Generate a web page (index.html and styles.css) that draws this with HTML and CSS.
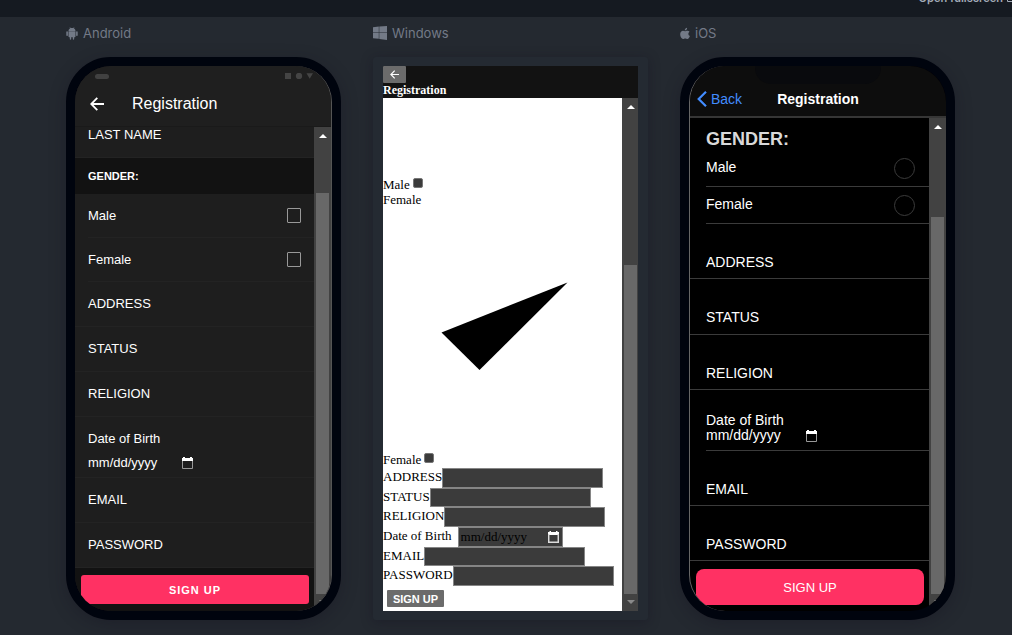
FILE: index.html
```html
<!DOCTYPE html>
<html lang="en">
<head>
<meta charset="utf-8">
<title>Registration preview</title>
<link rel="stylesheet" href="styles.css">
</head>
<body>
<header class="topbar">
  <a class="fullscreen" href="#">Open fullscreen <svg width="9" height="9" viewBox="0 0 9 9" fill="none" stroke="currentColor"><path d="M4 1.500H1.500V7.500H7.500V5M5 .5h3.500V4M8.500.5L4 5"/></svg></a>
</header>
<main class="stage">

  <section class="preview">
    <h2 class="platform"><svg width="12" height="13" viewBox="0 0 12 13" fill="currentColor"><path d="M2.500 4C2.600 2.700 3.300 1.800 4.200 1.300L3.600.3 3.900.1 4.600 1.100Q6 .7 7.400 1.100L8.100.1 8.400.3 7.800 1.300C8.700 1.800 9.400 2.700 9.500 4zM2.500 4.200h7v5.200q0 .8-.8.800H8.200v1.700q0 .8-.7.800t-.7-.8v-1.700H5.200v1.700q0 .8-.7.800t-.7-.8v-1.700H3.300q-.8 0-.8-.8zM.3 5.100q0-.8.800-.8t.8.800v3.200q0 .8-.8.800t-.8-.8zM10.100 5.100q0-.8.800-.8t.8.800v3.200q0 .8-.8.800t-.8-.8z"/></svg>Android</h2>
    <div class="phone">
      <div class="screen android">
        <div class="a-status"><span class="a-pill"></span><svg width="28" height="6" viewBox="0 0 28 6" fill="#444"><path d="M0 0h6v6H0zM21.500.3h6.500L24.700 5.700z"/><circle cx="14" cy="3" r="3.200"/></svg></div>
        <div class="a-bar">
          <button class="plain" aria-label="Back"><svg width="14" height="14" viewBox="0 0 14 14" fill="none" stroke="#fff" stroke-width="1.800"><path d="M14 7H1.500M7.300.9L1.200 7l6.100 6.100"/></svg></button>
          <h1 class="a-title">Registration</h1>
        </div>
        <div class="pane">
          <form class="a-form">
            <div class="a-row a-first"><label for="a-last">LAST NAME</label><input class="ghost" id="a-last"></div>
            <h3 class="a-head">GENDER:</h3>
            <div class="a-row a-check"><label for="a-male">Male</label><input type="checkbox" class="a-box" id="a-male"></div>
            <div class="a-row a-check"><label for="a-female">Female</label><input type="checkbox" class="a-box" id="a-female"></div>
            <div class="a-row"><label for="a-address">ADDRESS</label><input class="ghost" id="a-address"></div>
            <div class="a-row"><label for="a-status">STATUS</label><input class="ghost" id="a-status"></div>
            <div class="a-row"><label for="a-religion">RELIGION</label><input class="ghost" id="a-religion"></div>
            <div class="a-row a-date"><label for="a-dob">Date of Birth</label><span class="date"><input class="date-text" id="a-dob" value="mm/dd/yyyy"><svg width="11" height="12" viewBox="0 0 11 12"><path fill="#fff" d="M0 1h1V0h2v1h5V0h2v1h1v3H0z"/><path fill="none" stroke="#999" d="M.5 4v7.500h10V4"/></svg></span></div>
            <div class="a-row"><label for="a-email">EMAIL</label><input class="ghost" id="a-email"></div>
            <div class="a-row"><label for="a-pass">PASSWORD</label><input type="password" class="ghost" id="a-pass"></div>
            <div class="a-foot"><button type="button" class="a-submit">SIGN UP</button></div>
          </form>
          <div class="scroll a-scroll"><i class="up"></i><i class="thumb"></i><i class="down"></i></div>
        </div>
      </div>
    </div>
  </section>

  <section class="preview">
    <h2 class="platform"><svg width="14" height="14" viewBox="0 0 14 14" fill="currentColor"><path d="M0 1.200l5.800-.7v6H0zM6.300.4L14 0v6.500H6.300zM0 7h5.800v5.800L0 12.200zM6.300 7H14v7l-7.700-1.100z"/></svg>Windows</h2>
    <div class="card">
      <div class="screen windows">
        <div class="w-bar">
          <button class="w-back" aria-label="Back"><svg width="9" height="9" viewBox="0 0 9 9" fill="none" stroke="#fff" stroke-width="1.200"><path d="M9 4.500H1M4.700.7L.9 4.500l3.800 3.800"/></svg></button>
          <h1 class="w-title">Registration</h1>
        </div>
        <div class="pane">
          <form class="w-form">
            <div class="w-check"><label for="w-male">Male</label><input type="checkbox" class="w-box" id="w-male"></div>
            <div class="w-check">Female</div>
            <svg class="w-art" width="239" height="245" viewBox="0 0 239 245"><path d="M58.500 125.500L184.500 75.500 96.500 163z"/></svg>
            <div class="w-check"><label for="w-female">Female</label><input type="checkbox" class="w-box" id="w-female"></div>
            <div class="w-fields">
              <div class="w-row"><label for="w-address">ADDRESS</label><input class="w-input" id="w-address"></div>
              <div class="w-row"><label for="w-status">STATUS</label><input class="w-input" id="w-status"></div>
              <div class="w-row"><label for="w-religion">RELIGION</label><input class="w-input" id="w-religion"></div>
              <div class="w-row w-gap"><label for="w-dob">Date of Birth</label><span class="w-date"><input class="date-text" id="w-dob" value="mm/dd/yyyy"><svg width="11" height="12" viewBox="0 0 11 12"><path fill="#fff" d="M0 1h1.500V0H3v1h5V0h1.500v1H11v3H0z"/><path fill="none" stroke="#ddd" stroke-width="1.500" d="M.7 3v8.200h9.600V3"/></svg></span></div>
              <div class="w-row"><label for="w-email">EMAIL</label><input class="w-input" id="w-email"></div>
              <div class="w-row"><label for="w-pass">PASSWORD</label><input type="password" class="w-input" id="w-pass"></div>
            </div>
            <button type="button" class="w-submit">SIGN UP</button>
          </form>
          <div class="scroll w-scroll"><i class="up"></i><i class="thumb"></i><i class="down"></i></div>
        </div>
      </div>
    </div>
  </section>

  <section class="preview">
    <h2 class="platform"><svg width="10" height="13" viewBox="0 0 11 13" fill="currentColor"><path d="M7.800.2C8 1.900 6.700 3.300 5.200 3.300 5 1.700 6.400.3 7.800.2zM5.500 4C6.200 4 7 3.300 8.200 3.400c1 .1 1.800.5 2.300 1.200-2 1.300-1.700 3.900.4 4.700-.5 1.500-1.600 3.300-2.700 3.300-.9 0-1.300-.6-2.400-.6s-1.500.6-2.400.6C1.800 12.600.2 9.800.2 7.400c0-2.600 1.600-3.900 3.100-3.900.9 0 1.600.5 2.200.5z"/></svg>iOS</h2>
    <div class="phone">
      <div class="screen ios">
        <div class="i-top">
          <div class="i-notch"></div>
          <div class="i-bar">
            <button class="plain i-back"><svg width="10" height="16" viewBox="0 0 10 16" fill="none" stroke="currentColor" stroke-width="2.200"><path d="M9 .8L1.700 8 9 15.200"/></svg>Back</button>
            <h1 class="i-title">Registration</h1>
          </div>
        </div>
        <div class="pane">
          <form class="i-form">
            <h3 class="i-head">GENDER:</h3>
            <div class="i-check"><label for="i-male">Male</label><input type="checkbox" class="i-box" id="i-male"></div>
            <div class="i-check"><label for="i-female">Female</label><input type="checkbox" class="i-box" id="i-female"></div>
            <div class="i-row"><label for="i-address">ADDRESS</label><input class="ghost" id="i-address"></div>
            <div class="i-row i-tall"><label for="i-status">STATUS</label><input class="ghost" id="i-status"></div>
            <div class="i-row"><label for="i-religion">RELIGION</label><input class="ghost" id="i-religion"></div>
            <div class="i-date"><label for="i-dob">Date of Birth</label><span class="date"><input class="date-text" id="i-dob" value="mm/dd/yyyy"><svg width="11" height="12" viewBox="0 0 11 12"><path fill="#fff" d="M0 1h1V0h2v1h5V0h2v1h1v3H0z"/><path fill="none" stroke="#999" d="M.5 4v7.500h10V4"/></svg></span></div>
            <div class="i-row"><label for="i-email">EMAIL</label><input class="ghost" id="i-email"></div>
            <div class="i-row"><label for="i-pass">PASSWORD</label><input type="password" class="ghost" id="i-pass"></div>
            <div class="i-foot"><button type="button" class="i-submit">SIGN UP</button></div>
          </form>
          <div class="scroll i-scroll"><i class="up"></i><i class="thumb"></i><i class="down"></i></div>
        </div>
      </div>
    </div>
  </section>
</main>
</body>
</html>
```
FILE: styles.css
```css
* { box-sizing: border-box; }
body { margin: 0; min-height: 100vh; background: #242930; font-family: "Liberation Sans", Arial, sans-serif; }
h1, h2, h3 { margin: 0; }
svg { flex: none; display: block; }
button { font-family: inherit; cursor: pointer; }
input { border-radius: 0; }

.topbar { height: 17px; background: #151a21; display: flex; justify-content: flex-end; align-items: flex-end; padding-bottom: 11px; overflow: hidden; }
.fullscreen { display: flex; align-items: center; gap: 3px; margin-right: -3px; color: #a3abb8; font: 600 11px/16px Inter, sans-serif; text-decoration: none; white-space: nowrap; }

.stage { display: grid; grid-template-columns: repeat(3, minmax(0, 1fr)); gap: 32px; padding: 8px 57px 15px 66px; }
.platform { display: flex; align-items: center; gap: 5px; height: 16px; margin-bottom: 16px; color: #737a87; font: 400 13px/16px Inter, sans-serif; }
.phone { border: 9px solid #00040e; border-radius: 45px; background: #00040e; box-shadow: 0 4px 16px rgba(20, 18, 32, .35); }
.card { padding: 9px 10px; border-radius: 3px; background: #242a32; box-shadow: 0 2px 12px rgba(20, 18, 32, .4); }
.phone .screen { border-radius: 36px; overflow: hidden; }
.pane { display: flex; }
.pane form { flex: 1; min-width: 0; }
.plain { display: flex; align-items: center; padding: 0; border: 0; background: none; }
.ghost { flex: 1; min-width: 0; height: 16px; padding: 0; border: 0; background: transparent; color: #fff; }

.scroll { width: 17px; background: #424242; display: flex; flex-direction: column; align-items: center; padding: 0 2px; }
.scroll .up { width: 0; border: 4px solid transparent; border-top: 0; border-bottom-color: #fff; margin-top: 7px; }
.scroll .down { width: 0; border: 4px solid transparent; border-bottom: 0; border-top-color: #8a8a8a; margin: 6px 0 7px; }
.scroll .thumb { flex: 1; width: 100%; background: #686868; }
.a-scroll .thumb { margin-top: 55px; }
.w-scroll .thumb { margin-top: 156px; }
.i-scroll .thumb { margin-top: 88px; }
.w-scroll { width: 16px; padding-right: 1px; }

.date { display: flex; align-items: center; }
.date-text { padding: 0; border: 0; background: transparent; color: inherit; font: inherit; }

.android { background: #1e1e1e; color: #fff; border-right: 1px solid #555; font-size: 13px; }
.a-status { height: 20px; display: flex; justify-content: space-between; align-items: center; padding: 0 18px 0 20px; background: #1f1f1f; }
.a-pill { width: 14px; height: 5px; border-radius: 3px; background: #414141; }
.a-bar { height: 41px; display: flex; align-items: center; gap: 28px; padding: 0 15px 4px; background: #1f1f1f; border-bottom: 1px solid #1a1a1a; }
.a-title { font-size: 16px; line-height: 20px; font-weight: 400; }
.a-row { display: flex; align-items: center; height: 45px; padding: 0 13px 1px; border-bottom: 1px solid #232323; }
.a-row.a-first { height: 31px; padding-bottom: 16px; }
.a-head { height: 36px; padding-left: 13px; background: #121212; font-size: 11px; line-height: 36px; }
.a-row.a-check { height: 44px; justify-content: space-between; padding: 0 13px 0 0; margin-left: 13px; }
.a-box { appearance: none; width: 14px; height: 15px; margin: 0; border: 1px solid #999; border-radius: 1px; }
.a-row.a-date { height: 61px; flex-direction: column; align-items: flex-start; justify-content: flex-end; gap: 9px; padding-bottom: 7px; }
.a-date .date-text { width: 94px; }
.a-foot { height: 43px; padding: 7px 5px 7px 6px; background: #121212; }
.a-submit { width: 100%; height: 29px; border: 0; border-radius: 3px; background: #ff3163; color: #fff; font-size: 11px; font-weight: 700; letter-spacing: 1px; }

.windows { background: #fff; color: #000; font: 13px/15px "Liberation Serif", "Times New Roman", serif; }
.w-bar { height: 32px; background: #121212; }
.w-back { display: flex; justify-content: center; align-items: center; width: 23px; height: 17px; padding: 0; border: 0; border-radius: 1px; background: #6b6b6b; }
.w-title { color: #fff; font-size: 12px; line-height: 14px; font-weight: 700; }
.pane .w-form { padding-top: 79px; }
.w-check { display: flex; gap: 3px; height: 15px; }
.w-box { appearance: none; width: 10px; height: 10px; margin: 1px 0 0; border: 1px solid #767676; border-radius: 2px; background: #3b3b3b; }
.w-art { max-width: 100%; }
.w-fields { display: grid; grid-auto-rows: minmax(0, 1fr); height: 118px; margin-top: 1px; }
.w-row { display: flex; line-height: 18px; }
.w-input { width: 161px; min-width: 0; padding: 0; border: 1px solid #858585; background: #3b3b3b; }
.w-gap { gap: 6px; }
.w-date { display: flex; align-items: center; justify-content: space-between; width: 105px; padding: 0 3px 0 2px; border: 1px solid #858585; background: #3b3b3b; }
.w-date .date-text { flex: 1; min-width: 0; }
.w-submit { display: block; width: 57px; height: 17px; margin: 4px; padding: 0; border: 0; border-radius: 1px; background: #6b6b6b; color: #fff; font: 700 11px/18px "Liberation Sans", Arial, sans-serif; }

.ios { background: #000; color: #fff; border-left: 1px solid #666; font-size: 14px; }
.i-top { height: 52px; background: #0d0d0d; border-bottom: 2px solid #363636; }
.i-notch { width: 126px; height: 18px; margin: 0 auto; border-radius: 0 0 16px 16px; background: #090a0d; }
.i-bar { display: grid; grid-template-columns: 1fr auto 1fr; align-items: center; height: 30px; padding: 0 7px; }
.i-back { gap: 4px; color: #428cff; font-size: 14px; }
.i-title { font-size: 14px; line-height: 16px; }
.i-head { padding: 11px 16px 0; color: #d9d9d9; font-size: 18px; line-height: 21px; }
.i-check { display: flex; align-items: center; justify-content: space-between; height: 37px; margin-left: 16px; padding-right: 14px; border-bottom: 1px solid #3b3b3b; }
.i-check label { padding-bottom: 2px; }
.i-box { appearance: none; width: 21px; height: 21px; margin: 0; border: 1px solid #3b3b3b; border-radius: 50%; }
.i-row { display: flex; align-items: flex-end; height: 55px; padding: 0 16px 8px; border-bottom: 1px solid #3b3b3b; }
.i-row.i-tall { height: 56px; padding-bottom: 9px; }
.i-date { display: flex; flex-direction: column; justify-content: flex-end; height: 61px; margin-left: 16px; padding-bottom: 7px; border-bottom: 1px solid #3b3b3b; line-height: 15px; }
.i-date .date-text { width: 100px; height: 15px; }
.i-foot { padding: 8px 5px 6px 6px; }
.i-submit { width: 100%; height: 36px; border: 0; border-radius: 8px; background: #ff3163; color: #fff; font-size: 13px; }
```
